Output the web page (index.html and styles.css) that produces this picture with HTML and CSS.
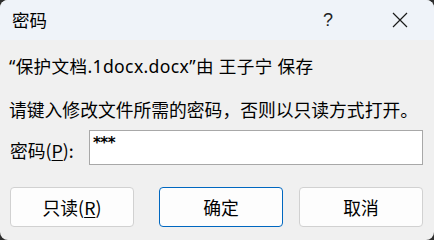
FILE: index.html
```html
<!DOCTYPE html>
<html lang="zh-CN">
<head>
<meta charset="utf-8">
<link rel="stylesheet" href="styles.css">
</head>
<body>
<div class="win">
  <div class="titlebar">
    <span class="title">密码</span>
    <span class="help">?</span>
    <span class="close"><svg width="16" height="16" viewBox="0 0 16 16"><path d="M1 1 L15 15 M15 1 L1 15" stroke="#1a1a1a" stroke-width="1.2" fill="none"/></svg></span>
  </div>
  <div class="content">
    <div class="line1">“保护文档.1docx.docx”由 王子宁 保存</div>
    <div class="line2">请键入修改文件所需的密码，否则以只读方式打开。</div>
    <div class="pwrow">
      <label class="pwlabel">密码(<u>P</u>):</label>
      <div class="pwbox">***</div>
    </div>
    <div class="buttons">
      <div class="btn btn-ro">只读(<u>R</u>)</div>
      <div class="btn btn-ok">确定</div>
      <div class="btn btn-cancel">取消</div>
    </div>
  </div>
</div>
</body>
</html>
```
FILE: styles.css
```css
html, body {
  margin: 0;
  padding: 0;
  background: #2e2e2e;
}
body {
  width: 434px;
  height: 240px;
  overflow: hidden;
  font-family: "Noto Sans CJK SC", sans-serif;
  color: #000;
}
.win {
  width: 434px;
  height: 240px;
  background: #f0f0f0;
  border-radius: 8px;
  overflow: hidden;
  display: flex;
  flex-direction: column;
}
.titlebar {
  height: 40px;
  background: #eff3f9;
  display: flex;
  align-items: center;
  font-size: 17.5px;
  line-height: 20px;
}
.title {
  margin-left: 12px;
  flex: 1;
}
.help {
  width: 20px;
  margin-right: 54px;
  text-align: center;
  font-family: "Liberation Sans", sans-serif;
  font-size: 18px;
  color: #222;
}
.close {
  width: 16px;
  height: 16px;
  margin-right: 26px;
  display: flex;
}
.content {
  padding: 0 10px 0 9px;
  font-size: 17.8px;
  line-height: 22px;
}
.line1 {
  margin-top: 15px;
  font-family: "Noto Sans", "Noto Sans CJK SC", sans-serif;
  font-size: 17.6px;
  letter-spacing: 0.35px;
}
.line2 {
  margin-top: 21px;
}
.pwrow {
  display: flex;
  align-items: center;
  margin-top: 10px;
}
.pwlabel {
  width: 79px;
  padding-top: 5px;
  padding-left: 1px;
}
.pwlabel u, .btn u {
  text-decoration-thickness: 1px;
  text-underline-offset: 2px;
}
.pwbox {
  flex: 1;
  margin-right: 1px;
  background: #fff;
  border: 1px solid #a8a8a8;
  box-sizing: border-box;
  height: 35px;
  font-family: "DejaVu Sans", sans-serif;
  font-weight: bold;
  font-size: 15px;
  line-height: 16px;
  padding: 4px 0 0 3px;
  letter-spacing: -0.5px;
}
.buttons {
  display: flex;
  margin-top: 22px;
  margin-left: 1px;
}
.btn {
  width: 124px;
  height: 40px;
  box-sizing: border-box;
  border: 1px solid #d1d1d1;
  border-radius: 4px;
  background: #fdfdfd;
  display: flex;
  align-items: center;
  justify-content: center;
}
.btn-ok {
  margin-left: 25px;
  border-color: #0067c0;
}
.btn-cancel {
  margin-left: 16px;
}
```
